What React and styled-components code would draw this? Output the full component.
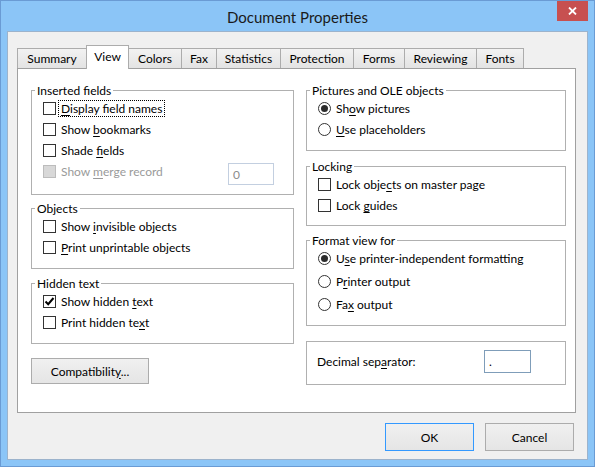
import React from 'react'
import styled, { createGlobalStyle } from 'styled-components'

const GlobalStyle = createGlobalStyle`
  html, body {
    margin: 0;
    padding: 0;
    background: #fff;
  }
  body {
    font-family: Lato, "Noto Sans", sans-serif;
    font-size: 12px;
    color: #000;
  }
`

const Window = styled.div`
  box-sizing: border-box;
  width: 595px;
  height: 467px;
  border: 1px solid #6a9bd4;
  background: #8bc5f7;
  padding: 0 6px 6px;
  display: flex;
  flex-direction: column;
`

const TitleBar = styled.div`
  height: 30px;
  flex: none;
  display: grid;
  grid-template-columns: 1fr auto 1fr;
  align-items: start;
`

const Title = styled.div`
  grid-column: 2;
  padding-top: 1px;
  font-size: 15px;
  line-height: 30px;
  color: #1a1a1a;
  white-space: nowrap;
`

const CloseButton = styled.div`
  grid-column: 3;
  justify-self: end;
  width: 31px;
  height: 20px;
  background: #c75050;
  display: flex;
  align-items: center;
  justify-content: center;
`

const Client = styled.div`
  flex: 1;
  background: #f0f0f0;
  border: 1px solid #9cb3cc;
  padding: 13px 11px 0 9px;
  display: flex;
  flex-direction: column;
`

const TabRow = styled.div`
  height: 23px;
  display: flex;
  align-items: flex-end;
`

const Tab = styled.div`
  box-sizing: border-box;
  width: ${p => p.$w}px;
  height: ${p => (p.$active ? 24 : 20)}px;
  margin-left: -1px;
  &:first-child {
    margin-left: 0;
  }
  margin-bottom: ${p => (p.$active ? -1 : 0)}px;
  border: 1px solid #acacac;
  border-bottom: none;
  background: ${p => (p.$active ? '#fff' : 'linear-gradient(#f2f2f2, #e3e3e3)')};
  position: relative;
  z-index: ${p => (p.$active ? 1 : 0)};
  display: flex;
  align-items: center;
  justify-content: center;
  padding-bottom: ${p => (p.$active ? 2 : 0)}px;
  line-height: 15px;
  white-space: nowrap;
`

const Panel = styled.div`
  box-sizing: border-box;
  height: 345px;
  background: #fff;
  border: 1px solid #a0a0a0;
  padding: 14px 10px 0 13px;
  display: grid;
  grid-template-columns: 263px 260px;
  column-gap: 12px;
  align-items: start;
`

const Column = styled.div`
  display: flex;
  flex-direction: column;
  align-items: stretch;
`

const Group = styled.fieldset`
  margin: ${p => p.$mt || 0}px 0 0;
  padding: ${p => p.$pt || 0}px 0 ${p => p.$pb ?? 10}px 3px;
  border: 1px solid #b0b0b0;
  min-width: 0;
`

const Legend = styled.legend`
  padding: 0 2px;
  line-height: 15px;
  font-size: 12px;
`

const Row = styled.div`
  display: flex;
  align-items: center;
  height: ${p => p.$h || 21}px;
  padding-left: ${p => p.$pl ?? 8}px;
  margin-top: ${p => p.$gap || 0}px;
`

const Box = styled.span`
  box-sizing: border-box;
  flex: none;
  width: 13px;
  height: 13px;
  border: 1px solid ${p => (p.$disabled ? '#bcbcbc' : '#333')};
  background: ${p => (p.$disabled ? '#d8d8d8' : '#fff')};
  border-radius: ${p => (p.$round ? '50%' : '0')};
  display: flex;
  align-items: center;
  justify-content: center;
`

const Dot = styled.span`
  width: 7px;
  height: 7px;
  border-radius: 50%;
  background: #2b2b2b;
`

const Label = styled.span`
  margin-left: ${p => p.$ml ?? 3}px;
  padding: 0 2px;
  line-height: 15px;
  white-space: nowrap;
  color: ${p => (p.$disabled ? '#9a9a9a' : '#000')};
  outline: ${p => (p.$focus ? '1px dotted #000' : 'none')};
  u {
    text-underline-offset: 2px;
  }
`

const Field = styled.div`
  box-sizing: border-box;
  flex: none;
  width: ${p => p.$w}px;
  height: ${p => p.$h}px;
  margin-left: auto;
  margin-right: ${p => p.$mr}px;
  align-self: ${p => (p.$top ? 'flex-start' : 'center')};
  margin-top: ${p => p.$top || 0}px;
  border: 1px solid ${p => (p.$disabled ? '#c3cfe0' : '#7f9db9')};
  background: #fff;
  color: ${p => (p.$disabled ? '#8c8c8c' : '#000')};
  padding-left: 4px;
  display: flex;
  align-items: center;
`

const Button = styled.button`
  box-sizing: border-box;
  width: ${p => p.$w}px;
  height: ${p => p.$h}px;
  margin-top: ${p => p.$mt || 0}px;
  align-self: flex-start;
  padding: 0;
  border: 1px solid ${p => (p.$default ? '#3399ff' : '#acacac')};
  border-radius: 0;
  background: linear-gradient(#f0f0f0, #e5e5e5);
  font: inherit;
  color: #000;
  u {
    text-underline-offset: 2px;
  }
`

const ButtonRow = styled.div`
  display: flex;
  justify-content: flex-end;
  gap: 11px;
  margin-top: 10px;
  padding-right: 2px;
`

const Accel = ({ text }) => {
  const i = text.indexOf('&')
  if (i < 0) return text
  return (
    <>
      {text.slice(0, i)}
      <u>{text[i + 1]}</u>
      {text.slice(i + 2)}
    </>
  )
}

const CheckMark = () => (
  <svg width="11" height="11" viewBox="0 0 11 11">
    <polyline points="1.5,5.5 4.2,8.2 9.5,2" fill="none" stroke="#000" strokeWidth="2" />
  </svg>
)

const Check = ({ label, checked, disabled, focus, gap, children }) => (
  <Row $gap={gap}>
    <Box $disabled={disabled}>{checked && <CheckMark />}</Box>
    <Label $disabled={disabled} $focus={focus}>
      <Accel text={label} />
    </Label>
    {children}
  </Row>
)

const Radio = ({ label, checked, gap }) => (
  <Row $gap={gap}>
    <Box $round>{checked && <Dot />}</Box>
    <Label>
      <Accel text={label} />
    </Label>
  </Row>
)

const tabs = [
  ['Summary', 70],
  ['View', 43],
  ['Colors', 54],
  ['Fax', 36],
  ['Statistics', 65],
  ['Protection', 74],
  ['Forms', 52],
  ['Reviewing', 73],
  ['Fonts', 48],
]

export default function App() {
  return (
    <>
      <GlobalStyle />
      <Window>
        <TitleBar>
          <Title>Document Properties</Title>
          <CloseButton>
            <svg width="9" height="8" viewBox="0 0 9 8">
              <path d="M1 0.5 L8 7.5 M8 0.5 L1 7.5" stroke="#fff" strokeWidth="1.8" />
            </svg>
          </CloseButton>
        </TitleBar>
        <Client>
          <TabRow>
            {tabs.map(([name, w]) => (
              <Tab key={name} $w={w} $active={name === 'View'}>
                {name}
              </Tab>
            ))}
          </TabRow>
          <Panel>
            <Column>
              <Group $pb={12}>
                <Legend>Inserted fields</Legend>
                <Check label="&Display field names" focus />
                <Check label="Show &bookmarks" />
                <Check label="Shade &fields" />
                <Check label="Show &merge record" disabled>
                  <Field $w={46} $h={22} $mr={19} $top={2} $disabled>
                    0
                  </Field>
                </Check>
              </Group>
              <Group $mt={6}>
                <Legend>Objects</Legend>
                <Check label="Show &invisible objects" />
                <Check label="&Print unprintable objects" />
              </Group>
              <Group $mt={7}>
                <Legend>Hidden text</Legend>
                <Check label="Show hidden &text" checked />
                <Check label="Print hidden te&xt" />
              </Group>
              <Button $w={118} $h={26} $mt={14}>
                <Accel text="Compatibilit&y..." />
              </Button>
            </Column>
            <Column>
              <Group>
                <Legend>Pictures and OLE objects</Legend>
                <Radio label="Sh&ow pictures" checked />
                <Radio label="&Use placeholders" />
              </Group>
              <Group $mt={8} $pb={9}>
                <Legend>Locking</Legend>
                <Check label="Lock obje&cts on master page" />
                <Check label="Lock &guides" />
              </Group>
              <Group $mt={7}>
                <Legend>Format view for</Legend>
                <Radio label="U&se printer-independent formatting" checked />
                <Radio label="P&rinter output" gap={2} />
                <Radio label="Fa&x output" gap={2} />
              </Group>
              <Group $mt={15} $pt={8} $pb={11}>
                <Row $h={23} $pl={5}>
                  <Label $ml={0}>
                    <Accel text="Decimal sep&arator:" />
                  </Label>
                  <Field $w={47} $h={23} $mr={34}>
                    .
                  </Field>
                </Row>
              </Group>
            </Column>
          </Panel>
          <ButtonRow>
            <Button $w={89} $h={28} $default>
              OK
            </Button>
            <Button $w={89} $h={28}>
              Cancel
            </Button>
          </ButtonRow>
        </Client>
      </Window>
    </>
  )
}
